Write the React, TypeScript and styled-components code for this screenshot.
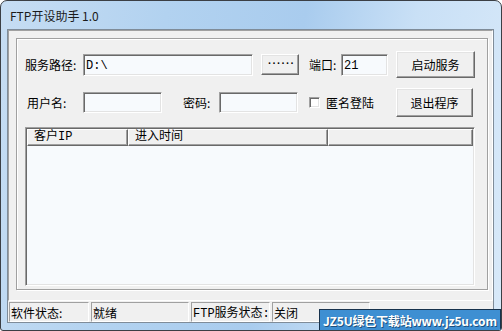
import React from "react";
import styled, { createGlobalStyle } from "styled-components";

const Global = createGlobalStyle`
  html, body { margin: 0; padding: 0; background: #ffffff; }
  * { box-sizing: border-box; }
`;

const ui = `"Noto Sans CJK SC", "Liberation Sans", sans-serif`;
const mono = `"Liberation Mono", "Noto Sans CJK SC", monospace`;

const Window = styled.div`
  position: relative;
  width: 502px;
  height: 331px;
  border: 1px solid #3b3f45;
  border-radius: 7px 7px 3px 3px;
  background: linear-gradient(100deg, #c6ddf3 0%, #b2d2f0 30%, #a9ccee 55%, #c9e0f6 75%, #d8e9f9 100%);
  display: flex;
  flex-direction: column;
  overflow: hidden;
  font-family: ${ui};
  font-size: 12px;
  color: #000;
`;

const TitleBar = styled.div`
  height: 28px;
  padding-left: 9px;
  display: flex;
  align-items: center;
  font-size: 12px;
  color: #1b1b1b;
`;

const Client = styled.div`
  flex: 1;
  margin: 0 7px 7px 6px;
  border: 1px solid #7f8c99;
  background: #f0f0f0;
  display: flex;
  flex-direction: column;
`;

const Panel = styled.div`
  flex: 1;
  border-top: 1px solid #a0a0a0;
  border-left: 1px solid #a0a0a0;
  border-right: 1px solid #ffffff;
  border-bottom: 1px solid #ffffff;
  padding: 7px 4px 10px 7px;
  display: flex;
`;

const Group = styled.div`
  flex: 1;
  border: 1px solid #a0a0a0;
  box-shadow: inset 1px 1px 0 #ffffff, 1px 1px 0 #ffffff;
  padding: 12px 12px 3px 8px;
  display: flex;
  flex-direction: column;
`;

const Row = styled.div<{ $h: number; $mt?: number }>`
  height: ${(p) => p.$h}px;
  margin-top: ${(p) => p.$mt ?? 0}px;
  display: flex;
  align-items: center;
`;

const Label = styled.span<{ $ml?: number; $w?: number }>`
  margin-left: ${(p) => p.$ml ?? 0}px;
  width: ${(p) => (p.$w ? `${p.$w}px` : "auto")};
  white-space: nowrap;
  font-size: 12px;
  line-height: 14px;
  color: #000;
`;

const Input = styled.div<{ $w: number; $h: number; $ml?: number }>`
  width: ${(p) => p.$w}px;
  height: ${(p) => p.$h}px;
  margin-left: ${(p) => p.$ml ?? 0}px;
  background: #f7fafd;
  border-top: 1px solid #a0a0a0;
  border-left: 1px solid #a0a0a0;
  border-right: 1px solid #ffffff;
  border-bottom: 1px solid #ffffff;
  box-shadow: inset 1px 1px 0 #696969, inset -1px -1px 0 #e3e3e3;
  font-family: ${mono};
  font-size: 12px;
  padding: 2px 0 0 2px;
  line-height: 14px;
  display: flex;
  align-items: center;
`;

const Button = styled.div<{ $w: number; $h: number; $ml?: number; $mr?: number }>`
  width: ${(p) => p.$w}px;
  height: ${(p) => p.$h}px;
  margin-left: ${(p) => p.$ml ?? 0}px;
  margin-right: ${(p) => p.$mr ?? 0}px;
  background: #f0f0f0;
  border-top: 1px solid #ffffff;
  border-left: 1px solid #ffffff;
  border-right: 1px solid #696969;
  border-bottom: 1px solid #696969;
  box-shadow: inset -1px -1px 0 #a0a0a0, inset 1px 1px 0 #e3e3e3;
  display: flex;
  align-items: center;
  justify-content: center;
  font-size: 12px;
  color: #000;
`;

const Dots = styled.span`
  font-family: ${mono};
  font-weight: bold;
  font-size: 10px;
  letter-spacing: -1.5px;
  margin-top: -6px;
`;

const Check = styled.div<{ $ml?: number }>`
  width: 11px;
  height: 11px;
  margin-left: ${(p) => p.$ml ?? 0}px;
  background: #ffffff;
  border-top: 1px solid #a0a0a0;
  border-left: 1px solid #a0a0a0;
  border-right: 1px solid #ffffff;
  border-bottom: 1px solid #ffffff;
  box-shadow: inset 1px 1px 0 #696969, inset -1px -1px 0 #e3e3e3;
`;

const Spacer = styled.div`
  flex: 1;
`;

const List = styled.div`
  margin: 10px 0 0 0;
  width: 450px;
  flex: 1;
  background: #f7fafd;
  border-top: 1px solid #a0a0a0;
  border-left: 1px solid #a0a0a0;
  border-right: 1px solid #ffffff;
  border-bottom: 1px solid #ffffff;
  box-shadow: inset 1px 1px 0 #696969, inset -1px -1px 0 #e3e3e3;
  padding: 1px;
  display: flex;
  flex-direction: column;
`;

const Header = styled.div`
  display: flex;
  height: 17px;
`;

const HeaderCell = styled.div<{ $w?: number }>`
  width: ${(p) => (p.$w ? `${p.$w}px` : "auto")};
  flex: ${(p) => (p.$w ? "none" : "1")};
  background: #f0f0f0;
  border-top: 1px solid #ffffff;
  border-left: 1px solid #ffffff;
  border-right: 1px solid #696969;
  border-bottom: 1px solid #696969;
  box-shadow: inset -1px -1px 0 #a0a0a0;
  padding-left: 6px;
  font-family: ${mono};
  font-size: 12px;
  line-height: 14px;
  white-space: nowrap;
`;

const StatusBar = styled.div`
  height: 21px;
  display: flex;
  gap: 2px;
  padding: 1px 0 0 1px;
`;

const StatusCell = styled.div<{ $w: number; $mono?: boolean }>`
  width: ${(p) => p.$w}px;
  height: 20px;
  border-top: 1px solid #a0a0a0;
  border-left: 1px solid #a0a0a0;
  border-right: 1px solid #ffffff;
  border-bottom: 1px solid #ffffff;
  padding-left: 1px;
  display: flex;
  align-items: center;
  font-family: ${(p) => (p.$mono ? mono : ui)};
  font-size: 12px;
  white-space: nowrap;
  overflow: hidden;
`;

const Watermark = styled.div`
  position: absolute;
  left: 318px;
  top: 308px;
  width: 182px;
  height: 24px;
  background: #3e8fd2;
  border: 1px solid #17324d;
  color: #ffffff;
  font-family: "Noto Sans CJK SC", "DejaVu Sans", sans-serif;
  font-weight: bold;
  font-size: 12px;
  letter-spacing: -0.2px;
  padding: 1px 0 0 3px;
  line-height: 20px;
  white-space: nowrap;
  text-shadow: 1px 1px 0 #1c4f7c;
`;

export default function App() {
  return (
    <>
      <Global />
      <Window>
        <TitleBar>FTP开设助手 1.0</TitleBar>
        <Client>
          <Panel>
            <Group>
              <Row $h={27}>
                <Label $w={58}>服务路径:</Label>
                <Input $w={170} $h={22}>D:\</Input>
                <Button $w={38} $h={21} $ml={8}>
                  <Dots>......</Dots>
                </Button>
                <Label $ml={10} $w={32}>端口:</Label>
                <Input $w={47} $h={22}>21</Input>
                <Spacer />
                <Button $w={79} $h={27}>启动服务</Button>
              </Row>
              <Row $h={29} $mt={10}>
                <Label $ml={2} $w={56}>用户名:</Label>
                <Input $w={79} $h={21}></Input>
                <Label $ml={21} $w={36}>密码:</Label>
                <Input $w={79} $h={21}></Input>
                <Check $ml={11} />
                <Label $ml={6}>匿名登陆</Label>
                <Spacer />
                <Button $w={77} $h={29} $mr={2}>退出程序</Button>
              </Row>
              <List>
                <Header>
                  <HeaderCell $w={101}>客户IP</HeaderCell>
                  <HeaderCell $w={200}>进入时间</HeaderCell>
                  <HeaderCell />
                </Header>
              </List>
            </Group>
          </Panel>
          <StatusBar>
            <StatusCell $w={80}>软件状态:</StatusCell>
            <StatusCell $w={98}>就绪</StatusCell>
            <StatusCell $w={79} $mono>FTP服务状态:</StatusCell>
            <StatusCell $w={98}>关闭</StatusCell>
          </StatusBar>
        </Client>
        <Watermark>JZ5U绿色下载站www.jz5u.com</Watermark>
      </Window>
    </>
  );
}
